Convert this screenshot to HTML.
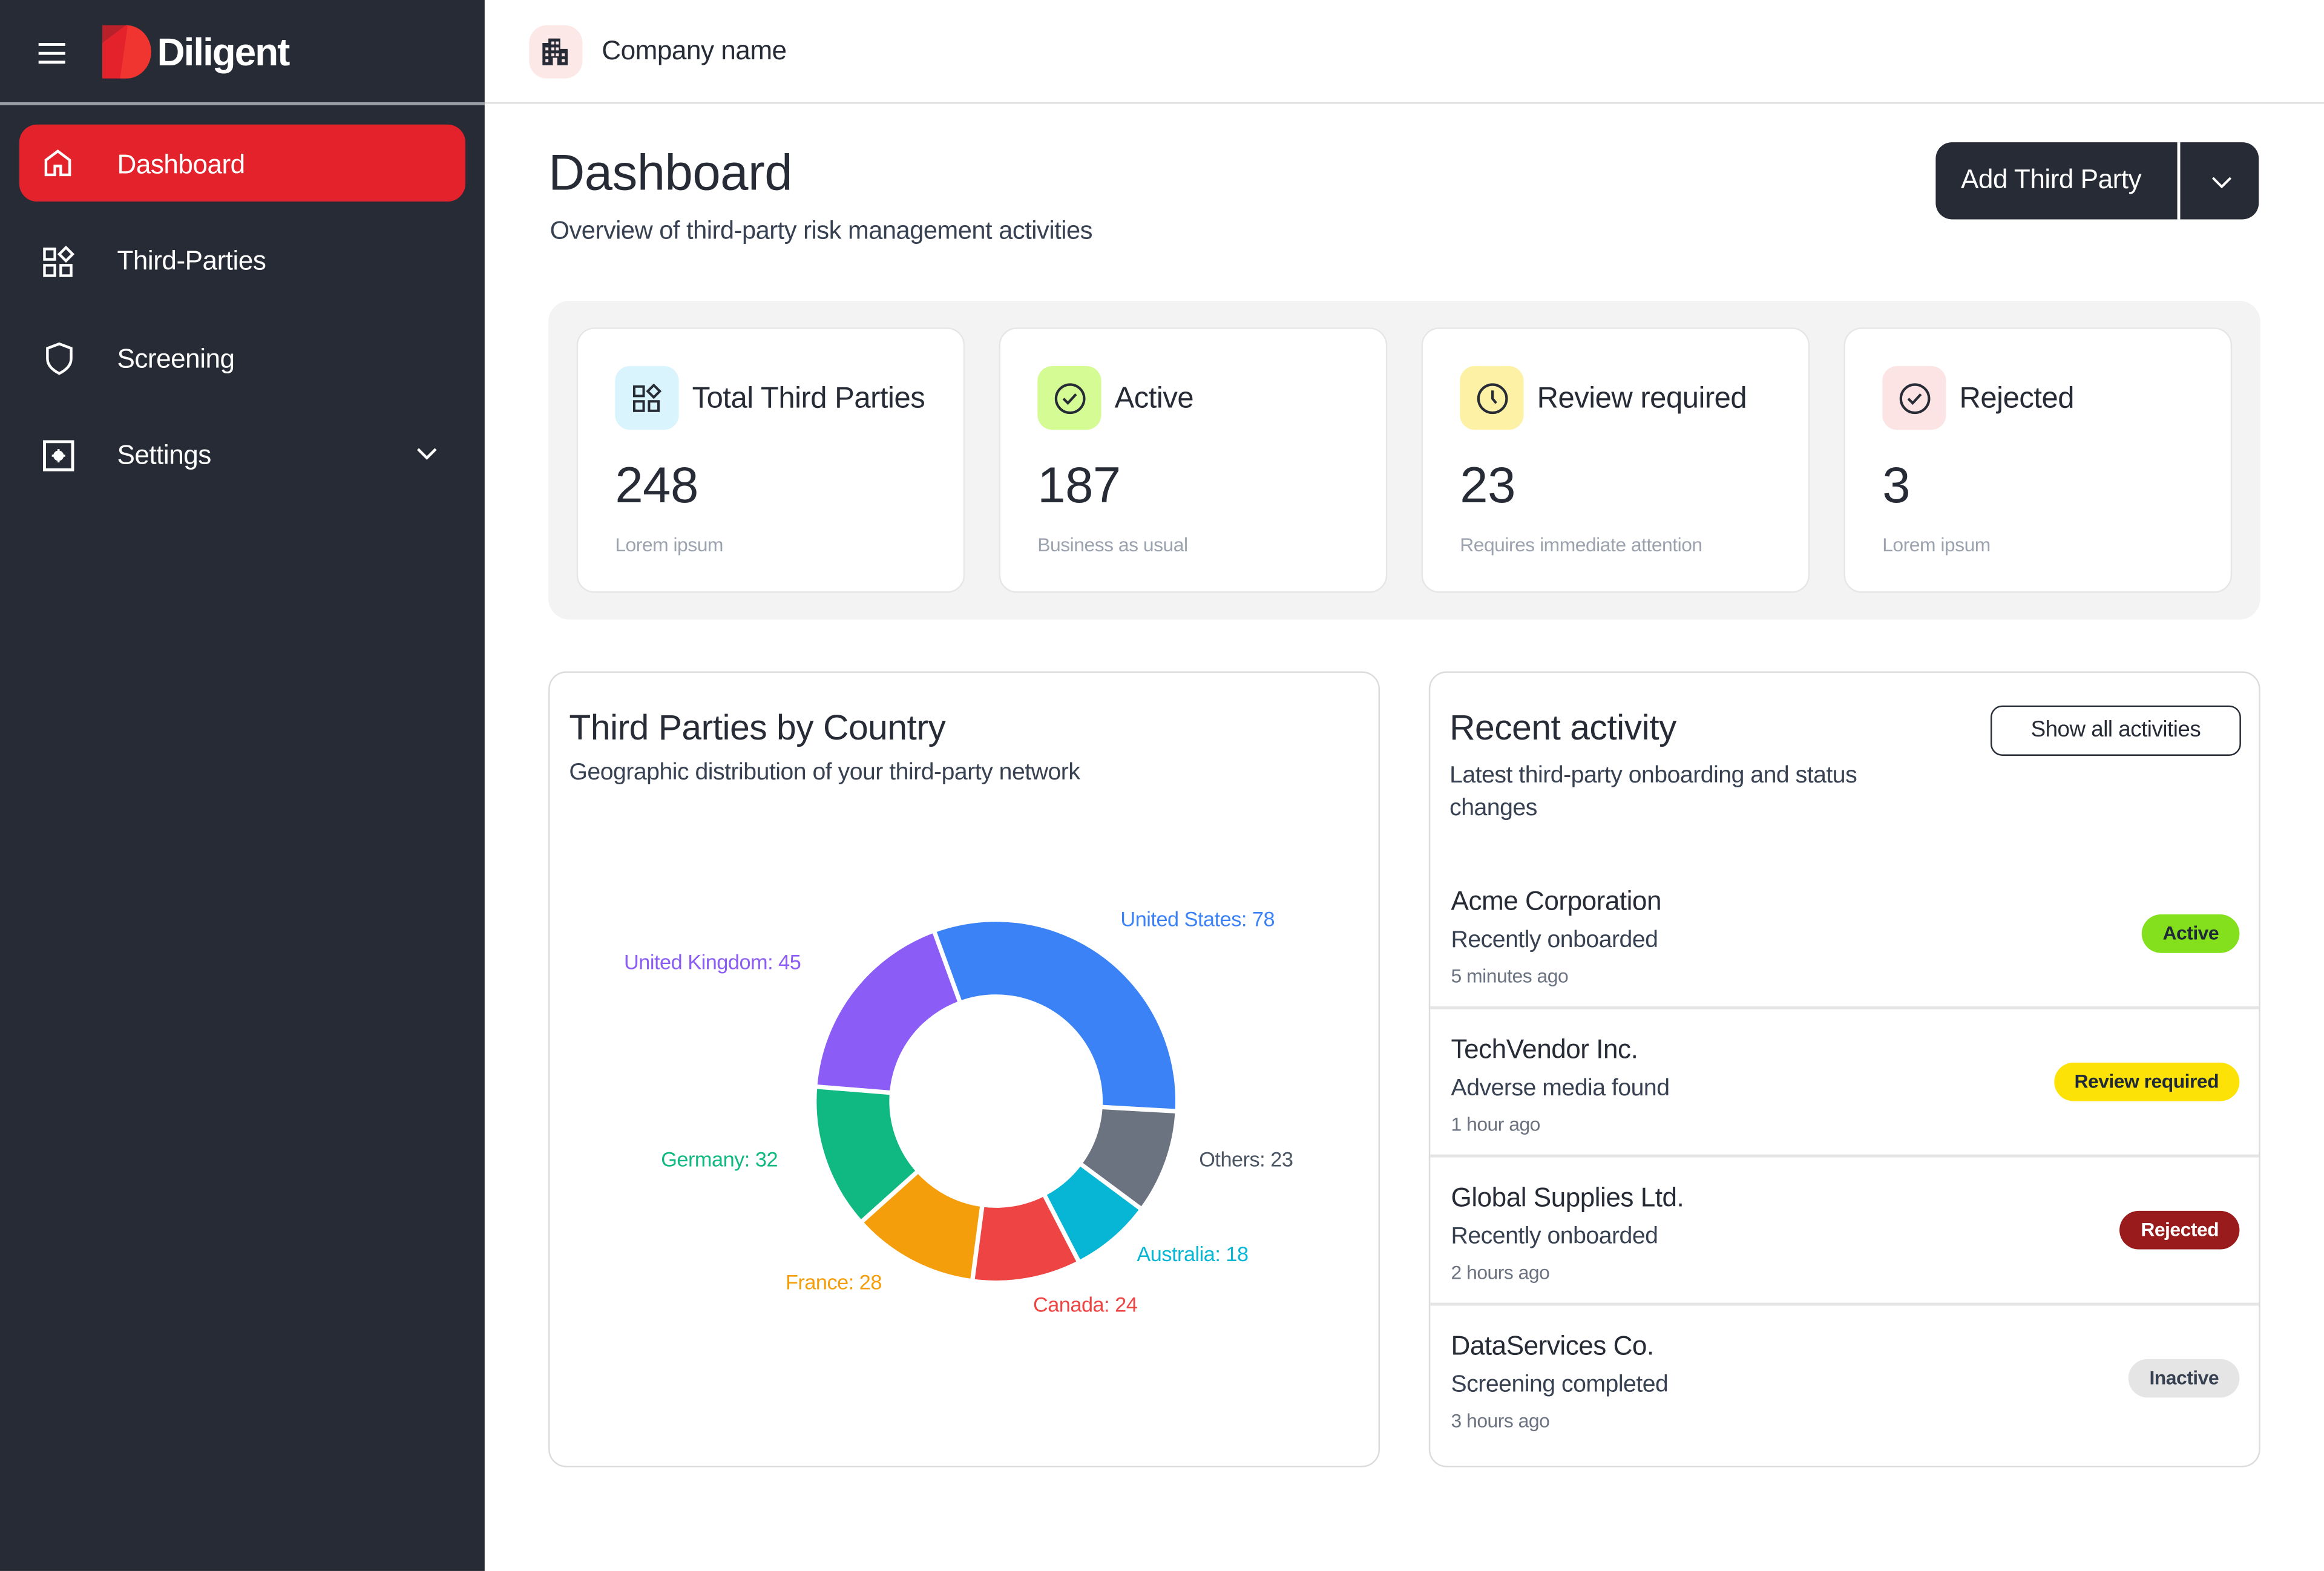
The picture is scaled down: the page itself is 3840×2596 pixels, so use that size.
<!DOCTYPE html>
<html><head><meta charset="utf-8">
<style>
*{box-sizing:border-box;margin:0;padding:0}
html,body{width:3840px;height:2595px;overflow:hidden;background:#fff}
#w{position:absolute;left:0;top:0;width:1568px;height:1060px;transform:scale(2.44898);transform-origin:0 0;font-family:"Liberation Sans",sans-serif;color:#262b35;letter-spacing:-0.2px}
.a{position:absolute;white-space:nowrap}
#side{position:absolute;left:0;top:0;width:327px;height:1060px;background:#262b35}
.nav{position:absolute;left:79px;font-size:18px;color:#fff;line-height:20px}
.card{position:absolute;top:221px;width:262px;height:179px;background:#fff;border:1px solid #e6e6e6;border-radius:12px}
.ib{position:absolute;left:25px;top:25px;width:43px;height:43px;border-radius:10px}
.ct{position:absolute;left:77px;top:35px;font-size:20px;line-height:24px}
.cn{position:absolute;left:25px;top:86px;font-size:34px;line-height:40px}
.cs{position:absolute;left:25px;top:138px;font-size:13px;color:#9ca3af}
.box{position:absolute;top:453px;height:537px;border:1px solid #dcdcdc;border-radius:12px;background:#fff}
.it{position:absolute;left:14px;font-size:18px;line-height:20px}
.is{position:absolute;left:14px;font-size:16px;color:#374151}
.im{position:absolute;left:14px;font-size:13px;color:#6b7280}
.bd{position:absolute;right:13px;height:26px;border-radius:13px;font-size:13px;font-weight:bold;line-height:26px;padding:0 14px}
.hr{position:absolute;left:0;right:0;height:2px;background:#e5e5e5}
.lbl{position:absolute;font-size:14px;white-space:nowrap}
</style></head><body><div id="w">
<div id="side">
  <svg class="a" style="left:25px;top:28px" width="20" height="16"><path d="M1 2H19M1 8H19M1 14H19" stroke="#fff" stroke-width="2"/></svg>
  <svg class="a" style="left:69px;top:17px" width="34" height="36" viewBox="0 0 34 36"><path d="M0 0H16A17 18 0 0 1 16 36H0Z" fill="#e3222b"/><path d="M0 0H16L0 12Z" fill="#b8202a"/><path d="M16 0A17 18 0 0 1 16 36H12L17 1Z" fill="#f0342f"/></svg>
  <div class="a" style="left:106px;top:20px;font-size:26px;font-weight:bold;color:#fff;letter-spacing:-0.8px">Diligent</div>
  <div class="a" style="left:0;top:69px;width:327px;height:2px;background:#9a9ea5"></div>
  <div class="a" style="left:13px;top:84px;width:301px;height:52px;border-radius:12px;background:#e3222b"></div>
  <svg class="a" style="left:29px;top:100px" width="20" height="20" viewBox="0 0 20 20" fill="none" stroke="#fff" stroke-width="1.8"><path d="M2 8L10 2L18 8V18H12V12H8V18H2Z"/></svg>
  <div class="nav" style="top:101px">Dashboard</div>
  <svg class="a" style="left:29px;top:166px" width="22" height="22" viewBox="0 0 22 22" fill="none" stroke="#fff" stroke-width="1.8"><rect x="1" y="2" width="7" height="7"/><rect x="1" y="13" width="7" height="7"/><rect x="12" y="13" width="7" height="7"/><path d="M15.5 1L20 5.5L15.5 10L11 5.5Z"/></svg>
  <div class="nav" style="top:166px">Third-Parties</div>
  <svg class="a" style="left:30px;top:231px" width="20" height="22" viewBox="0 0 20 22" fill="none" stroke="#fff" stroke-width="1.8"><path d="M10 1L18 4V11C18 16 14 19 10 21C6 19 2 16 2 11V4Z"/></svg>
  <div class="nav" style="top:232px">Screening</div>
  <svg class="a" style="left:29px;top:297px" width="22" height="22" viewBox="0 0 22 22" fill="none" stroke="#fff" stroke-width="2"><rect x="1" y="1" width="19" height="19"/><circle cx="10.5" cy="10.5" r="3" fill="#fff" stroke-width="1"/><path d="M10.5 6V7.5M10.5 13.5V15M6 10.5H7.5M13.5 10.5H15" stroke-width="1.4"/></svg>
  <div class="nav" style="top:297px">Settings</div>
  <svg class="a" style="left:281px;top:302px" width="14" height="9"><path d="M1 1L7 7L13 1" stroke="#fff" stroke-width="1.8" fill="none"/></svg>
</div>
<div class="a" style="left:327px;top:69px;width:1241px;height:1px;background:#dcdcdc"></div>
<div class="a" style="left:357px;top:17px;width:36px;height:36px;border-radius:12px;background:#fde8e8"></div>
<svg class="a" style="left:365px;top:25px" width="20" height="20" viewBox="0 0 20 20"><path d="M1 4H5V1H13V8H18V19H11V14H8V19H1Z" fill="#262b35"/><g fill="#fde8e8"><rect x="7" y="3" width="2" height="2"/><rect x="10" y="3" width="2" height="2"/><rect x="3" y="7" width="2" height="2"/><rect x="7" y="7" width="2" height="2"/><rect x="10" y="7" width="2" height="2"/><rect x="3" y="11" width="2" height="2"/><rect x="7" y="11" width="2" height="2"/><rect x="10" y="11" width="2" height="2"/><rect x="14" y="11" width="2" height="2"/><rect x="3" y="15" width="2" height="2"/><rect x="14" y="15" width="2" height="2"/></g></svg>
<div class="a" style="left:406px;top:24px;font-size:18px">Company name</div>

<div class="a" style="left:370px;top:98px;font-size:34px">Dashboard</div>
<div class="a" style="left:371px;top:146px;font-size:17px;color:#374151">Overview of third-party risk management activities</div>
<div class="a" style="left:1306px;top:96px;width:218px;height:52px;border-radius:11px;background:#262b35"></div>
<div class="a" style="left:1469px;top:96px;width:2px;height:52px;background:#fff"></div>
<div class="a" style="left:1323px;top:111px;font-size:18px;color:#fff">Add Third Party</div>
<svg class="a" style="left:1492px;top:119px" width="14" height="8"><path d="M1 1L7 7L13 1" stroke="#fff" stroke-width="1.6" fill="none"/></svg>

<div class="a" style="left:370px;top:203px;width:1155px;height:215px;border-radius:14px;background:#f3f3f3"></div>
<div class="card" style="left:389px"><div class="ib" style="background:#d9f4fd"></div>
<svg class="a" style="left:37px;top:37px" width="20" height="20" viewBox="0 0 22 22" fill="none" stroke="#262b35" stroke-width="1.8"><rect x="1" y="2" width="7" height="7"/><rect x="1" y="13" width="7" height="7"/><rect x="12" y="13" width="7" height="7"/><path d="M15.5 1L20 5.5L15.5 10L11 5.5Z"/></svg>
<div class="ct">Total Third Parties</div><div class="cn">248</div><div class="cs">Lorem ipsum</div></div>
<div class="card" style="left:674px"><div class="ib" style="background:#d5fb95"></div>
<svg class="a" style="left:36px;top:36px" width="22" height="22" viewBox="0 0 22 22" fill="none" stroke="#262b35" stroke-width="1.7"><circle cx="11" cy="11" r="9.5"/><path d="M6.5 11L9.5 14L15 8"/></svg>
<div class="ct">Active</div><div class="cn">187</div><div class="cs">Business as usual</div></div>
<div class="card" style="left:959px"><div class="ib" style="background:#fdf1a6"></div>
<svg class="a" style="left:36px;top:36px" width="22" height="22" viewBox="0 0 22 22" fill="none" stroke="#262b35" stroke-width="1.7"><circle cx="11" cy="11" r="9.5"/><path d="M11 5.5V11L13.5 14"/></svg>
<div class="ct">Review required</div><div class="cn">23</div><div class="cs">Requires immediate attention</div></div>
<div class="card" style="left:1244px"><div class="ib" style="background:#fde4e4"></div>
<svg class="a" style="left:36px;top:36px" width="22" height="22" viewBox="0 0 22 22" fill="none" stroke="#262b35" stroke-width="1.7"><circle cx="11" cy="11" r="9.5"/><path d="M6.5 11L9.5 14L15 8"/></svg>
<div class="ct">Rejected</div><div class="cn">3</div><div class="cs">Lorem ipsum</div></div>

<div class="box" style="left:370px;width:561px">
  <div class="a" style="left:13px;top:24px;font-size:24px">Third Parties by Country</div>
  <div class="a" style="left:13px;top:59px;font-size:16px;color:#374151">Geographic distribution of your third-party network</div>
</div>
<svg class="a" style="left:0;top:0" width="1568" height="1060">
<g fill="none" stroke-width="49">
<circle cx="672" cy="743" r="96.5" stroke="#3b82f6" stroke-dasharray="190.7 1000" transform="rotate(-110 672 743)"/>
<circle cx="672" cy="743" r="96.5" stroke="#6b7280" stroke-dasharray="56.3 1000" transform="rotate(3.2 672 743)"/>
<circle cx="672" cy="743" r="96.5" stroke="#06b6d4" stroke-dasharray="44 1000" transform="rotate(36.6 672 743)"/>
<circle cx="672" cy="743" r="96.5" stroke="#ef4444" stroke-dasharray="58.6 1000" transform="rotate(62.7 672 743)"/>
<circle cx="672" cy="743" r="96.5" stroke="#f59e0b" stroke-dasharray="68.4 1000" transform="rotate(97.5 672 743)"/>
<circle cx="672" cy="743" r="96.5" stroke="#10b981" stroke-dasharray="78.3 1000" transform="rotate(138.1 672 743)"/>
<circle cx="672" cy="743" r="96.5" stroke="#8b5cf6" stroke-dasharray="110 1000" transform="rotate(184.6 672 743)"/>
</g>
<g stroke="#fff" stroke-width="3">
<line x1="672" y1="743" x2="672" y2="615" transform="rotate(-20 672 743)"/>
<line x1="672" y1="743" x2="672" y2="615" transform="rotate(93.2 672 743)"/>
<line x1="672" y1="743" x2="672" y2="615" transform="rotate(126.6 672 743)"/>
<line x1="672" y1="743" x2="672" y2="615" transform="rotate(152.7 672 743)"/>
<line x1="672" y1="743" x2="672" y2="615" transform="rotate(187.5 672 743)"/>
<line x1="672" y1="743" x2="672" y2="615" transform="rotate(228.1 672 743)"/>
<line x1="672" y1="743" x2="672" y2="615" transform="rotate(274.6 672 743)"/>
</g>
<circle cx="672" cy="743" r="71" fill="#fff"/>
</svg>
<div class="lbl" style="left:756px;top:612px;color:#3b82f6">United States: 78</div>
<div class="lbl" style="left:421px;top:641px;color:#8b5cf6">United Kingdom: 45</div>
<div class="lbl" style="left:809px;top:774px;color:#4b5563">Others: 23</div>
<div class="lbl" style="left:446px;top:774px;color:#10b981">Germany: 32</div>
<div class="lbl" style="left:767px;top:838px;color:#06b6d4">Australia: 18</div>
<div class="lbl" style="left:530px;top:857px;color:#f59e0b">France: 28</div>
<div class="lbl" style="left:697px;top:872px;color:#ef4444">Canada: 24</div>

<div class="box" style="left:964px;width:561px">
  <div class="a" style="left:13px;top:24px;font-size:24px">Recent activity</div>
  <div class="a" style="left:13px;top:59px;font-size:16px;color:#374151;line-height:22px;white-space:normal;width:330px">Latest third-party onboarding and status changes</div>
  <div class="a" style="left:378px;top:22px;width:169px;height:34px;border:1.5px solid #262b35;border-radius:8px;font-size:15px;text-align:center;line-height:31px">Show all activities</div>
  <div class="it" style="top:144px">Acme Corporation</div><div class="is" style="top:172px">Recently onboarded</div><div class="im" style="top:197px">5 minutes ago</div>
  <div class="bd" style="top:163px;background:#84e01c;color:#1f2937">Active</div>
  <div class="hr" style="top:225px"></div>
  <div class="it" style="top:244px">TechVendor Inc.</div><div class="is" style="top:272px">Adverse media found</div><div class="im" style="top:297px">1 hour ago</div>
  <div class="bd" style="top:263px;background:#fde208;color:#1f2937">Review required</div>
  <div class="hr" style="top:325px"></div>
  <div class="it" style="top:344px">Global Supplies Ltd.</div><div class="is" style="top:372px">Recently onboarded</div><div class="im" style="top:397px">2 hours ago</div>
  <div class="bd" style="top:363px;background:#991b1b;color:#fff">Rejected</div>
  <div class="hr" style="top:425px"></div>
  <div class="it" style="top:444px">DataServices Co.</div><div class="is" style="top:472px">Screening completed</div><div class="im" style="top:497px">3 hours ago</div>
  <div class="bd" style="top:463px;background:#e5e5e5;color:#374151">Inactive</div>
</div>
</div></body></html>
